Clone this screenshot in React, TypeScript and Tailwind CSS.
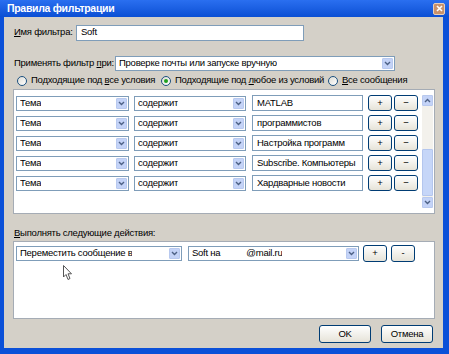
import React from "react";

const font = { fontFamily: '"Liberation Sans", Arial, sans-serif' };

function Arrow() {
    return (
        <div className="w-[11px] h-[11px] mr-[1px] shrink-0 rounded-[1px] bg-[#c4d3f7] border border-[#b8c9ef] flex items-center justify-center">
            <svg width="7" height="5" viewBox="0 0 7 5">
                <path d="M1 1 L3.5 3.5 L6 1" stroke="#4d6185" strokeWidth="1.4" fill="none" />
            </svg>
        </div>
    );
}

function Combo({ children, className }: { children: React.ReactNode; className: string }) {
    return (
        <div className={`h-[15px] shrink-0 bg-white border border-[#7f9db9] flex items-center justify-between pl-[3px] ${className}`}>
            <span className="overflow-hidden">{children}</span>
            <Arrow />
        </div>
    );
}

function TextBox({ text, className }: { text: string; className: string }) {
    return (
        <div className={`h-[16px] shrink-0 bg-white border border-[#7f9db9] flex items-center pl-[4px] overflow-hidden ${className}`}>
            <span>{text}</span>
        </div>
    );
}

function XpButton({ children, className }: { children: React.ReactNode; className: string }) {
    return (
        <div className={`shrink-0 rounded-[3px] border border-[#003c74] bg-gradient-to-b from-white to-[#e6e3d8] flex items-center justify-center ${className}`}>
            {children}
        </div>
    );
}

function Radio({ checked, children }: { checked?: boolean; children: React.ReactNode }) {
    return (
        <div className="flex items-center gap-[4px]">
            <div className="w-[10px] h-[10px] rounded-full border border-[#1c5180] bg-gradient-to-br from-[#dcdcd6] to-white flex items-center justify-center">
                {checked && <div className="w-[4px] h-[4px] rounded-full bg-[#21a121]" />}
            </div>
            <span>{children}</span>
        </div>
    );
}

const rows = ["MATLAB", "программистов", "Настройка программ", "Subscribe. Компьютеры", "Хардварные новости"];

export default function App() {
    return (
        <div style={font} className="w-[449px] h-[354px] bg-[#0b50d8] flex flex-col text-[9.5px] tracking-[-0.25px] text-black whitespace-nowrap overflow-hidden">
            {/* title bar */}
            <div className="h-[17px] flex items-center justify-between pl-[7px] pr-[4px] bg-gradient-to-b from-[#2a6ff0] to-[#0a4fd4]">
                <span className="text-white font-bold text-[10.5px] tracking-[-0.3px]">Правила фильтрации</span>
                <div className="w-[12px] h-[12px] rounded-[2px] bg-[#c9916a] border border-[#e8d0bc] flex items-center justify-center">
                    <svg width="7" height="7" viewBox="0 0 7 7">
                        <path d="M1 1 L6 6 M6 1 L1 6" stroke="white" strokeWidth="1.6" />
                    </svg>
                </div>
            </div>

            {/* body */}
            <div className="relative flex-1 ml-[4px] mr-[6px] mb-[6px] bg-[#d4d0c8] flex flex-col pl-[9px] pr-[8px]">
                <div className="flex items-center mt-[8px] h-[15px]">
                    <span className="w-[63px] pl-[1px]"><u>И</u>мя фильтра:</span>
                    <TextBox text="Soft" className="w-[228px] h-[15px]" />
                </div>

                <div className="flex items-center mt-[16px] h-[15px]">
                    <span className="w-[102px] pl-[1px]">Применять фильтр <u>п</u>ри:</span>
                    <Combo className="w-[280px]">Проверке почты или запуске вручную</Combo>
                </div>

                <div className="flex items-center mt-[2px] h-[15px] pl-[4px]">
                    <div className="w-[144px]"><Radio>Подходящие под <u>в</u>се условия</Radio></div>
                    <div className="w-[167px]"><Radio checked>Подходящие под <u>л</u>юбое из условий</Radio></div>
                    <Radio><u>В</u>се сообщения</Radio>
                </div>

                {/* conditions panel */}
                <div className="mt-[1px] h-[125px] bg-white border border-[#a5acb5] flex">
                    <div className="flex-1 flex flex-col gap-[4px] pt-[5px] pl-[2px]">
                        {rows.map(r => (
                            <div key={r} className="flex items-center">
                                <Combo className="w-[113px]">Тема</Combo>
                                <Combo className="w-[112px] ml-[5px]">содержит</Combo>
                                <TextBox text={r} className="w-[111px] ml-[6px]" />
                                <XpButton className="w-[24px] h-[16px] ml-[5px]">+</XpButton>
                                <XpButton className="w-[24px] h-[16px] ml-[2px]">−</XpButton>
                            </div>
                        ))}
                    </div>
                    <div className="w-[11px] my-[5px] mr-[1px] flex flex-col bg-[#f3f1ec]">
                        <div className="h-[11px] bg-[#c4d3f7] border border-[#b8c9ef] rounded-[1px] flex items-center justify-center">
                            <svg width="7" height="5" viewBox="0 0 7 5">
                                <path d="M1 4 L3.5 1.5 L6 4" stroke="#4d6185" strokeWidth="1.4" fill="none" />
                            </svg>
                        </div>
                        <div className="flex-1" />
                        <div className="h-[47px] bg-[#c6d6f8] border border-[#b4c6ee] rounded-[1px]" />
                        <div className="h-[11px] mt-[1px] bg-[#c4d3f7] border border-[#b8c9ef] rounded-[1px] flex items-center justify-center">
                            <svg width="7" height="5" viewBox="0 0 7 5">
                                <path d="M1 1 L3.5 3.5 L6 1" stroke="#4d6185" strokeWidth="1.4" fill="none" />
                            </svg>
                        </div>
                    </div>
                </div>

                <div className="mt-[13px] h-[12px] flex items-center pl-[1px]">
                    <span><u>В</u>ыполнять следующие действия:</span>
                </div>

                {/* actions panel */}
                <div className="mt-[2px] h-[78px] bg-white border border-[#a5acb5] pt-[3px] pl-[2px]">
                    <div className="flex items-center">
                        <Combo className="w-[166px]">Переместить сообщение в</Combo>
                        <Combo className="w-[171px] ml-[6px]">
                            Soft на<span className="ml-[26px]">@mail.ru</span>
                        </Combo>
                        <XpButton className="w-[24px] h-[17px] ml-[4px]">+</XpButton>
                        <XpButton className="w-[24px] h-[17px] ml-[4px]">-</XpButton>
                    </div>
                </div>

                <div className="flex justify-end gap-[10px] mt-[6px] pr-[2px]">
                    <XpButton className="w-[52px] h-[18px]">OK</XpButton>
                    <XpButton className="w-[52px] h-[18px]">Отмена</XpButton>
                </div>

                {/* mouse cursor */}
                <svg className="absolute left-[59px] top-[248px]" width="10" height="16" viewBox="0 0 10 16">
                    <path d="M0.5 0.5 L0.5 12 L3 9.5 L5 14.5 L7 13.5 L5 8.8 L8.5 8.8 Z" fill="white" stroke="#555" strokeWidth="1" />
                </svg>
            </div>
        </div>
    );
}
